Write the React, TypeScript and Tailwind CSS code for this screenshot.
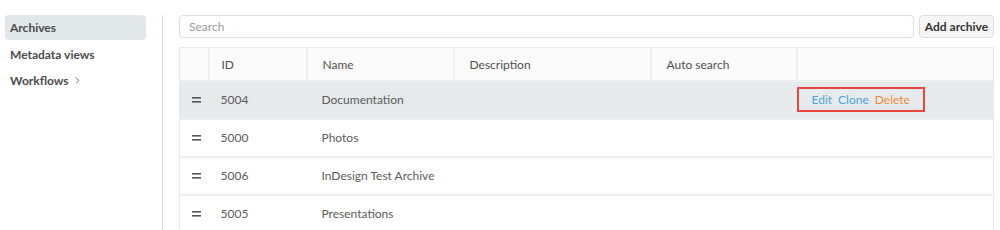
import { ChevronRight } from 'lucide-react';

const rows = [
    { id: '5004', name: 'Documentation', active: true },
    { id: '5000', name: 'Photos' },
    { id: '5006', name: 'InDesign Test Archive' },
    { id: '5005', name: 'Presentations' },
];

const DragHandle = () => (
    <svg width="9" height="6" viewBox="0 0 9 6" className="block">
        <rect x="0" y="0" width="9" height="1.6" fill="#555" />
        <rect x="0" y="4" width="9" height="1.6" fill="#555" />
    </svg>
);

export default function App() {
    return (
        <div
            className="flex h-[230px] w-[1000px] overflow-hidden bg-white pt-[15px] text-[12px] text-[#5a5a5a]"
            style={{ fontFamily: 'Lato, "Open Sans", sans-serif' }}
        >
            {/* Sidebar */}
            <div className="w-[162px] shrink-0 pl-[5px] pr-[16px]">
                <div className="flex h-[25px] items-center rounded-sm bg-[#e2e7e9] pl-[5px] font-bold text-[#4a4a4a]">
                    Archives
                </div>
                <div className="flex h-[27px] items-center pl-[5px] pt-[2px] font-bold text-[#4a4a4a]">
                    Metadata views
                </div>
                <div className="flex h-[27px] items-center gap-[3px] pl-[5px] font-bold text-[#4a4a4a]">
                    Workflows
                    <ChevronRight className="h-[11px] w-[11px] text-[#666]" strokeWidth={2} />
                </div>
            </div>

            {/* Divider */}
            <div className="w-px shrink-0 bg-[#dcdcdc]" />

            {/* Main */}
            <div className="flex-1 pl-[16px] pr-[6px]">
                <div className="flex gap-[5px]">
                    <input
                        placeholder="Search"
                        className="h-[23px] flex-1 rounded-sm border border-[#dedede] px-[9px] text-[12px] text-[#555] outline-none placeholder:text-[#9a9a9a]"
                    />
                    <button className="h-[23px] w-[75px] rounded-sm border border-[#dedede] bg-[#f5f5f5] text-[12px] font-bold text-[#333]">
                        Add archive
                    </button>
                </div>

                <table className="mt-[9px] w-full table-fixed border-collapse border border-[#e8e8e8]">
                    <colgroup>
                        <col className="w-[29px]" />
                        <col className="w-[98px]" />
                        <col className="w-[147px]" />
                        <col className="w-[197px]" />
                        <col className="w-[146px]" />
                        <col />
                    </colgroup>
                    <thead>
                        <tr className="h-[33px] bg-[#fafafa] text-left text-[#4f4f4f]">
                            <th className="border-r-2 border-[#eeeeee]" />
                            <th className="border-r-2 border-[#eeeeee] pl-3 pt-[2px] font-normal">ID</th>
                            <th className="border-r-2 border-[#eeeeee] pl-[15px] pt-[2px] font-normal">Name</th>
                            <th className="border-r-2 border-[#eeeeee] pl-[15px] pt-[2px] font-normal">Description</th>
                            <th className="border-r-2 border-[#eeeeee] pl-[15px] pt-[2px] font-normal">Auto search</th>
                            <th />
                        </tr>
                    </thead>
                    <tbody>
                        {rows.map((row) => (
                            <tr
                                key={row.id}
                                className={`h-[38px] border-t-2 border-[#eeeeee] ${row.active ? 'bg-[#e6eaec]' : 'bg-white'}`}
                            >
                                <td className="pl-[12px]">
                                    <DragHandle />
                                </td>
                                <td className="pl-3">{row.id}</td>
                                <td className="pl-[15px]">{row.name}</td>
                                <td />
                                <td />
                                <td>
                                    {row.active && (
                                        <div className="flex h-[25px] w-[128px] items-center gap-[6px] border-2 border-[#e8453c] pl-[13px]">
                                            <span className="text-[#4aa3d6]">Edit</span>
                                            <span className="text-[#4aa3d6]">Clone</span>
                                            <span className="text-[#f08a36]">Delete</span>
                                        </div>
                                    )}
                                </td>
                            </tr>
                        ))}
                    </tbody>
                </table>
            </div>
        </div>
    );
}
